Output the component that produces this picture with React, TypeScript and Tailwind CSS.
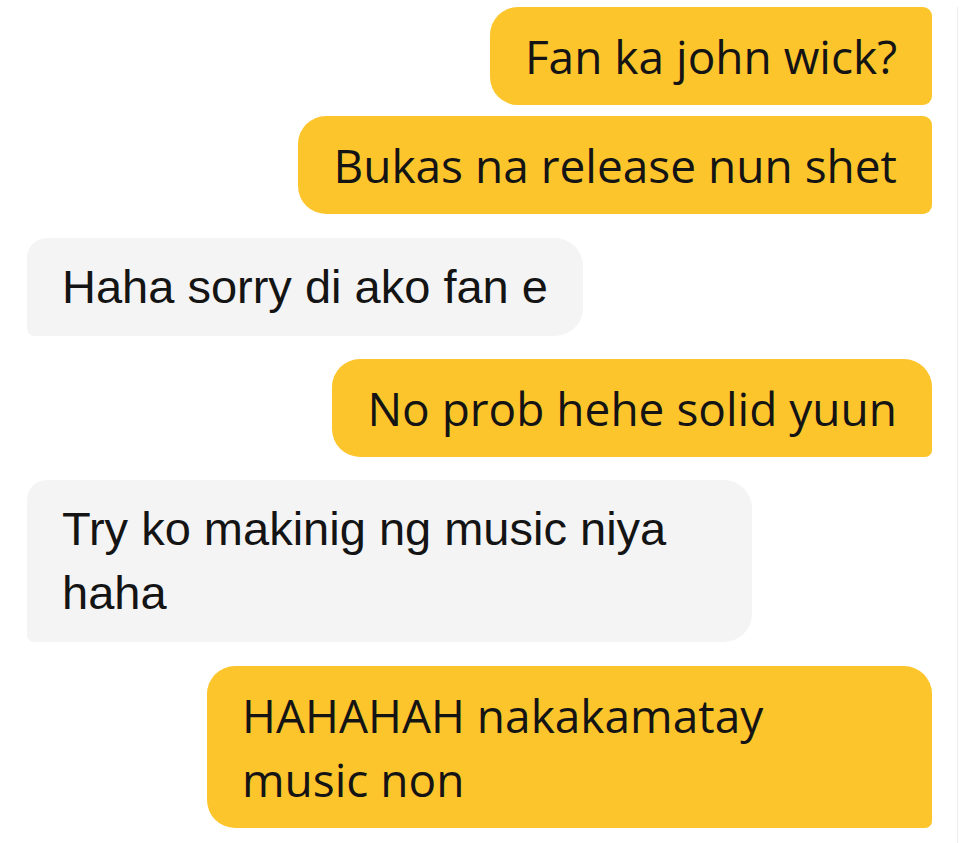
import React from 'react';

type Msg = {
  id: number;
  text: string;
  mine: boolean;
  corners: string;
  gap: string;
};

// Bumble-style thread: yellow = me, grey = them
const messages: Msg[] = [
  { id: 1, text: 'Fan ka john wick?', mine: true, corners: 'rounded-l-[28px] rounded-r-[9px]', gap: 'mt-[7px]' },
  { id: 2, text: 'Bukas na release nun shet', mine: true, corners: 'rounded-l-[28px] rounded-r-[9px]', gap: 'mt-[11px]' },
  { id: 3, text: 'Haha sorry di ako fan e', mine: false, corners: 'rounded-r-[28px] rounded-tl-[20px] rounded-bl-[7px]', gap: 'mt-[24px]' },
  { id: 4, text: 'No prob hehe solid yuun', mine: true, corners: 'rounded-l-[28px] rounded-tr-[28px] rounded-br-[7px]', gap: 'mt-[23px]' },
  { id: 5, text: 'Try ko makinig ng music niya haha', mine: false, corners: 'rounded-r-[28px] rounded-tl-[20px] rounded-bl-[7px]', gap: 'mt-[23px]' },
  { id: 6, text: 'HAHAHAH nakakamatay music non', mine: true, corners: 'rounded-l-[28px] rounded-tr-[28px] rounded-br-[7px]', gap: 'mt-[24px]' },
];

const Bubble: React.FC<{ msg: Msg }> = ({ msg }) => {
  const tone = msg.mine
    ? "bg-[#fdc52c] font-['Open_Sans',sans-serif] text-[46px]"
    : "bg-[#f4f4f4] font-['Liberation_Sans',Arial,sans-serif] text-[47px]";
  return (
    <div className={`flex ${msg.mine ? 'justify-end' : 'justify-start'} ${msg.gap}`}>
      <div className={`max-w-[725px] px-[35px] py-[17px] leading-[64px] text-[#141414] ${tone} ${msg.corners}`}>
        {msg.text}
      </div>
    </div>
  );
};

export default function App() {
  return (
    <div className="w-[960px] h-[843px] bg-white overflow-hidden">
      <div className="h-full w-[958px] border-r border-[#ececec] pl-[27px] pr-[25px]">
        {messages.map((m) => (
          <Bubble key={m.id} msg={m} />
        ))}
      </div>
    </div>
  );
}
